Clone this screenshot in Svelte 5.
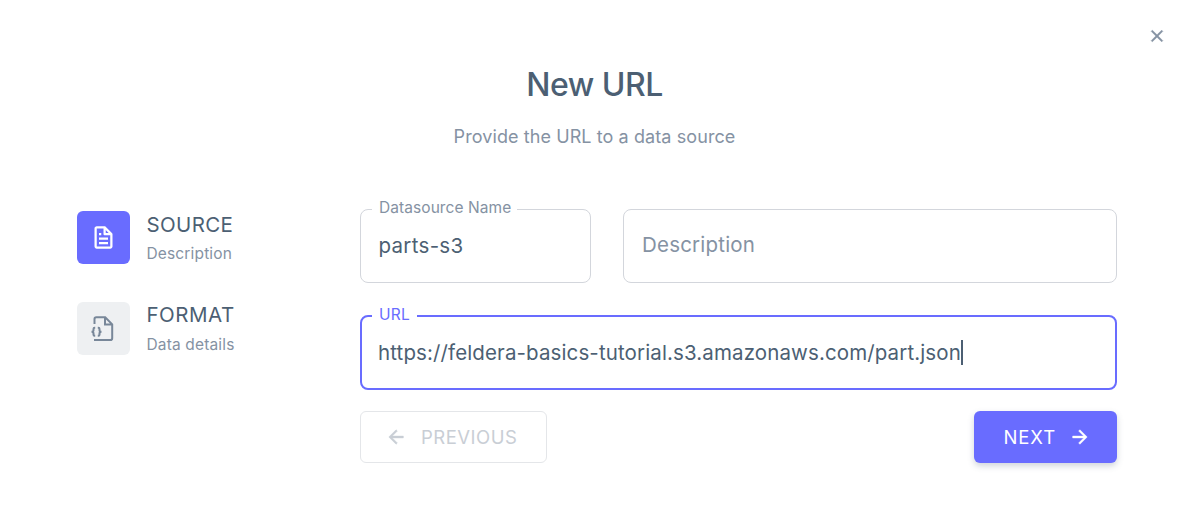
<script>
  const steps = [
    { icon: 'file', title: 'SOURCE', text: 'Description', active: true },
    { icon: 'json', title: 'FORMAT', text: 'Data details', active: false },
  ];
</script>

<main class="dialog">
  <button class="close" aria-label="Close">
    <svg viewBox="0 0 24 24" width="20" height="20"><path d="M19 6.41 17.59 5 12 10.59 6.41 5 5 6.41 10.59 12 5 17.59 6.41 19 12 13.41 17.59 19 19 17.59 13.41 12z" fill="currentColor" stroke="currentColor" stroke-width="0.6" /></svg>
  </button>
  <header>
    <h1>New URL</h1>
    <p>Provide the URL to a data source</p>
  </header>
  <div class="body">
    <nav>
      {#each steps as step}
        <div class="step" class:active={step.active}>
          <span class="avatar">
            {#if step.icon === 'file'}
              <svg viewBox="0 0 24 24" width="27" height="27" fill="currentColor"><path d="M19.903 8.586a.997.997 0 0 0-.196-.293l-6-6a.997.997 0 0 0-.293-.196c-.03-.014-.062-.022-.094-.033a.991.991 0 0 0-.259-.051C13.04 2.011 13.021 2 13 2H6c-1.103 0-2 .897-2 2v16c0 1.103.897 2 2 2h12c1.103 0 2-.897 2-2V9c0-.021-.011-.04-.013-.062a.952.952 0 0 0-.051-.259c-.01-.032-.019-.063-.033-.093zM16.586 8H14V5.414L16.586 8zM6 20V4h6v5a1 1 0 0 0 1 1h5l.002 10H6z" /><path d="M8 12h8v2H8zm0 4h8v2H8zm0-8h2v2H8z" /></svg>
            {:else}
              <svg class="json" viewBox="0 0 26 26" width="26" height="26" fill="none" stroke="currentColor" stroke-width="2"><path d="M5.5 9V4.1Q5.5 2.3 7.3 2.3H16.2L23.2 9.3V23.2Q23.2 25 21.4 25H5M16 2.5V9.5H23" /><path d="M6.2 12.8H5.6Q4.5 12.8 4.5 13.9V15.2Q4.5 16.6 2.6 16.8Q4.5 17 4.5 18.4V19.7Q4.5 20.8 5.6 20.8H6.2M8.8 12.8H9.4Q10.5 12.8 10.5 13.9V15.2Q10.5 16.6 12.4 16.8Q10.5 17 10.5 18.4V19.7Q10.5 20.8 9.4 20.8H8.8" /></svg>
            {/if}
          </span>
          <span class="labels"><b>{step.title}</b><small>{step.text}</small></span>
        </div>
      {/each}
    </nav>
    <section>
      <div class="row">
        <div class="field"><span class="label name-label">Datasource Name</span><span class="value name">parts-s3</span></div>
        <div class="field"><span class="value placeholder">Description</span></div>
      </div>
      <div class="field focused"><span class="label url-label">URL</span><span class="value url">https://feldera-basics-tutorial.s3.amazonaws.com/part.json</span><i class="caret"></i></div>
      <div class="actions">
        <button class="prev" disabled><svg viewBox="0 0 24 24" width="22" height="22"><path d="M20 11v2H8l5.5 5.5-1.42 1.42L4.16 12l7.92-7.92L13.5 5.5 8 11z" fill="currentColor" stroke="currentColor" stroke-width="0.5" /></svg><span>PREVIOUS</span></button>
        <button class="next"><span>NEXT</span><svg viewBox="0 0 24 24" width="22" height="22"><path d="M4 11v2h12l-5.5 5.5 1.42 1.42L19.84 12l-7.92-7.92L10.5 5.5 16 11z" fill="currentColor" stroke="currentColor" stroke-width="0.5" /></svg></button>
      </div>
    </section>
  </div>
</main>

<style>
  :global(body) { background: #fff; }
  .dialog { box-sizing: border-box; position: relative; width: 1190px; height: 527px; padding: 64px 73px 0 77px; font-family: Inter, sans-serif; color: #4c5f73; overflow: hidden; }
  button { font: inherit; margin: 0; padding: 0; border: 0; background: none; }
  svg { display: block; flex: none; }
  .close { position: absolute; left: 1147px; top: 26px; color: #8592a3; }
  header { text-align: center; margin-right: 5px; }
  h1 { margin: 0; font-size: 32px; line-height: 42px; font-weight: 500; letter-spacing: -0.5px; }
  p { margin: 17px 0 0; font-size: 18px; line-height: 28px; color: #8592a3; letter-spacing: 0.09px; }
  .body { display: grid; grid-template-columns: 283px 757px; margin-top: 58px; }
  nav { display: flex; flex-direction: column; gap: 38px; padding-top: 2px; }
  .step { display: flex; align-items: center; gap: 16.5px; height: 53px; }
  .avatar { width: 53px; height: 53px; border-radius: 6px; display: flex; align-items: center; justify-content: center; background: #eef0f2; color: #788799; }
  .avatar svg { margin-right: 1px; }
  .avatar .json { margin: 0 3px 1px 0; }
  .active .avatar { background: #696cff; color: #fff; }
  .labels { display: flex; flex-direction: column; white-space: nowrap; padding-top: 1px; }
  b { font-size: 20.5px; line-height: 30px; font-weight: 400; letter-spacing: 0.35px; }
  .step:not(.active) b { margin-top: -1px; padding-bottom: 1px; letter-spacing: 0.5px; }
  small { font-size: 15.5px; line-height: 27px; color: #8592a3; letter-spacing: 0.15px; }
  .row { display: grid; grid-template-columns: 231px 494px; gap: 32px; }
  .field { box-sizing: border-box; position: relative; display: flex; align-items: center; height: 74px; border: 1px solid #d3d6dc; border-radius: 8px; padding: 0 18px; }
  .focused { border: 2px solid #696cff; margin-top: 32px; height: 75px; padding: 0 16px; }
  .label { position: absolute; left: 11px; top: -14px; padding: 0 6px 0 7px; background: #fff; font-size: 15.5px; line-height: 24px; color: #8592a3; white-space: nowrap; letter-spacing: 0.07px; }
  .focused .label { left: 10px; color: #696cff; padding-right: 7px; letter-spacing: 0.2px; }
  .value { font-size: 20.5px; line-height: 30px; white-space: nowrap; letter-spacing: 0.12px; }
  .name { margin-left: -0.5px; letter-spacing: 0.3px; }
  .placeholder { color: #8592a3; letter-spacing: 0.2px; padding-bottom: 2px; }
  .caret { width: 2px; height: 25px; background: #4c5f73; }
  .actions { display: flex; justify-content: space-between; margin-top: 21px; }
  .actions button { box-sizing: border-box; display: flex; align-items: center; height: 52px; border-radius: 6px; font-size: 18.5px; letter-spacing: 0.5px; }
  .prev { width: 187px; border: 1px solid #e4e6e9; color: #c9ced5; padding-left: 24px; gap: 14px; }
  .next { width: 143px; background: #696cff; color: #fff; padding-left: 29.5px; box-shadow: 0 3px 6px rgba(67, 89, 113, 0.25); }
  .actions .next { gap: 12.5px; letter-spacing: 0.9px; }
</style>
